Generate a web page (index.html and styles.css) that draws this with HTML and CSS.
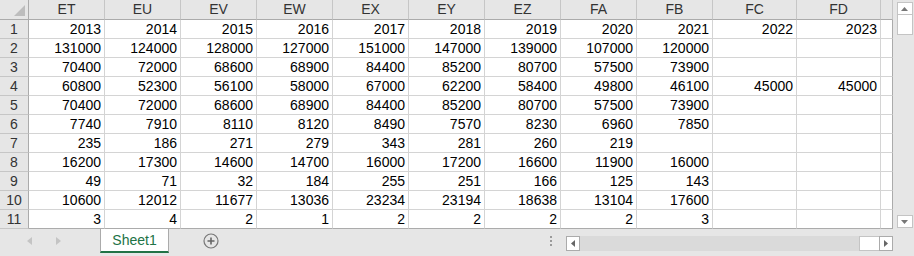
FILE: index.html
```html
<!DOCTYPE html>
<html>
<head>
<meta charset="utf-8">
<link rel="stylesheet" href="styles.css">
</head>
<body>
<div class="app">
  <div class="main">
    <div class="sheet">
      <div class="corner"><div class="tri"></div></div>
      <div class="ch">ET</div><div class="ch">EU</div><div class="ch">EV</div><div class="ch">EW</div><div class="ch">EX</div><div class="ch">EY</div><div class="ch">EZ</div><div class="ch">FA</div><div class="ch">FB</div><div class="ch">FC</div><div class="ch">FD</div><div class="ch"></div>

      <div class="rh">1</div><div class="c">2013</div><div class="c">2014</div><div class="c">2015</div><div class="c">2016</div><div class="c">2017</div><div class="c">2018</div><div class="c">2019</div><div class="c">2020</div><div class="c">2021</div><div class="c">2022</div><div class="c">2023</div><div class="c"></div>

      <div class="rh">2</div><div class="c">131000</div><div class="c">124000</div><div class="c">128000</div><div class="c">127000</div><div class="c">151000</div><div class="c">147000</div><div class="c">139000</div><div class="c">107000</div><div class="c">120000</div><div class="c"></div><div class="c"></div><div class="c"></div>

      <div class="rh">3</div><div class="c">70400</div><div class="c">72000</div><div class="c">68600</div><div class="c">68900</div><div class="c">84400</div><div class="c">85200</div><div class="c">80700</div><div class="c">57500</div><div class="c">73900</div><div class="c"></div><div class="c"></div><div class="c"></div>

      <div class="rh">4</div><div class="c">60800</div><div class="c">52300</div><div class="c">56100</div><div class="c">58000</div><div class="c">67000</div><div class="c">62200</div><div class="c">58400</div><div class="c">49800</div><div class="c">46100</div><div class="c">45000</div><div class="c">45000</div><div class="c"></div>

      <div class="rh">5</div><div class="c">70400</div><div class="c">72000</div><div class="c">68600</div><div class="c">68900</div><div class="c">84400</div><div class="c">85200</div><div class="c">80700</div><div class="c">57500</div><div class="c">73900</div><div class="c"></div><div class="c"></div><div class="c"></div>

      <div class="rh">6</div><div class="c">7740</div><div class="c">7910</div><div class="c">8110</div><div class="c">8120</div><div class="c">8490</div><div class="c">7570</div><div class="c">8230</div><div class="c">6960</div><div class="c">7850</div><div class="c"></div><div class="c"></div><div class="c"></div>

      <div class="rh">7</div><div class="c">235</div><div class="c">186</div><div class="c">271</div><div class="c">279</div><div class="c">343</div><div class="c">281</div><div class="c">260</div><div class="c">219</div><div class="c"></div><div class="c"></div><div class="c"></div><div class="c"></div>

      <div class="rh">8</div><div class="c">16200</div><div class="c">17300</div><div class="c">14600</div><div class="c">14700</div><div class="c">16000</div><div class="c">17200</div><div class="c">16600</div><div class="c">11900</div><div class="c">16000</div><div class="c"></div><div class="c"></div><div class="c"></div>

      <div class="rh">9</div><div class="c">49</div><div class="c">71</div><div class="c">32</div><div class="c">184</div><div class="c">255</div><div class="c">251</div><div class="c">166</div><div class="c">125</div><div class="c">143</div><div class="c"></div><div class="c"></div><div class="c"></div>

      <div class="rh">10</div><div class="c">10600</div><div class="c">12012</div><div class="c">11677</div><div class="c">13036</div><div class="c">23234</div><div class="c">23194</div><div class="c">18638</div><div class="c">13104</div><div class="c">17600</div><div class="c"></div><div class="c"></div><div class="c"></div>

      <div class="rh last">11</div><div class="c last">3</div><div class="c last">4</div><div class="c last">2</div><div class="c last">1</div><div class="c last">2</div><div class="c last">2</div><div class="c last">2</div><div class="c last">2</div><div class="c last">3</div><div class="c last"></div><div class="c last"></div><div class="c last"></div>
    </div>
    <div class="vscroll">
      <div class="vbtn"><svg width="7" height="4" viewBox="0 0 7 4"><path d="M0 4 L3.5 0 L7 4 Z" fill="#777"/></svg></div>
      <div class="vthumb"></div>
      <div class="vtrack"></div>
      <div class="vbtn"><svg width="7" height="4" viewBox="0 0 7 4"><path d="M0 0 L3.5 4 L7 0 Z" fill="#777"/></svg></div>
    </div>
  </div>
  <div class="tabbar">
    <div class="nav">
      <svg width="5" height="8" viewBox="0 0 5 8"><path d="M5 0 L0 4 L5 8 Z" fill="#c4c4c4"/></svg>
      <svg width="5" height="8" viewBox="0 0 5 8"><path d="M0 0 L5 4 L0 8 Z" fill="#c4c4c4"/></svg>
    </div>
    <div class="tab">Sheet1</div>
    <div class="add"><svg width="16" height="16" viewBox="0 0 16 16"><circle cx="8" cy="8" r="7" fill="none" stroke="#777" stroke-width="1.2"/><path d="M8 4.5 V11.5 M4.5 8 H11.5" stroke="#666" stroke-width="1.6"/></svg></div>
    <div class="spacer"></div>
    <div class="dots"><span></span><span></span><span></span></div>
    <div class="hscroll">
      <div class="hbtn"><svg width="4" height="7" viewBox="0 0 4 7"><path d="M4 0 L0 3.5 L4 7 Z" fill="#666"/></svg></div>
      <div class="htrack"></div>
      <div class="hthumb"></div>
      <div class="hbtn"><svg width="4" height="7" viewBox="0 0 4 7"><path d="M0 0 L4 3.5 L0 7 Z" fill="#666"/></svg></div>
    </div>
  </div>
</div>
</body>
</html>
```

FILE: styles.css
```css
html, body {
  margin: 0;
  padding: 0;
  background: #e6e6e6;
}
.app {
  width: 914px;
  height: 256px;
  display: flex;
  flex-direction: column;
  font-family: "Liberation Sans", Arial, sans-serif;
  overflow: hidden;
}
.main {
  display: flex;
  height: 229px;
}
.sheet {
  display: grid;
  grid-template-columns: 29px repeat(9, 76px) repeat(2, 84px) 12px;
  grid-template-rows: 20px repeat(11, 19px);
  width: 893px;
  background: #fff;
  font-size: 14px;
}
.sheet > div {
  box-sizing: border-box;
  border-right: 1px solid #d4d4d4;
  border-bottom: 1px solid #d4d4d4;
  overflow: hidden;
  white-space: nowrap;
}
.corner {
  background: #e6e6e6;
  position: relative;
  border-right-color: #ababab !important;
  border-bottom-color: #ababab !important;
}
.tri {
  position: absolute;
  right: 3px;
  bottom: 3px;
  width: 0;
  height: 0;
  border-left: 11px solid transparent;
  border-bottom: 11px solid #bdbdbd;
}
.ch {
  background: #e6e6e6;
  color: #333;
  text-align: center;
  line-height: 19px;
  border-right-color: #c6c6c6 !important;
  border-bottom-color: #ababab !important;
}
.rh {
  background: #e6e6e6;
  color: #333;
  text-align: center;
  line-height: 18px;
  border-right-color: #ababab !important;
  border-bottom-color: #c6c6c6 !important;
}
.c {
  text-align: right;
  padding-right: 3px;
  line-height: 18px;
  color: #000;
}
.sheet > div:nth-child(13n) {
  border-right-color: #ababab;
}
.sheet > .last {
  border-bottom-color: #ababab;
}
.vscroll {
  width: 21px;
  display: flex;
  flex-direction: column;
  align-items: center;
  padding: 2px 0 1px 2px;
  box-sizing: border-box;
  background: #e6e6e6;
}
.vbtn {
  width: 16px;
  height: 13px;
  box-sizing: border-box;
  border: 1px solid #c4c4c4;
  background: #fff;
  display: flex;
  align-items: center;
  justify-content: center;
}
.vthumb {
  width: 16px;
  height: 20px;
  box-sizing: border-box;
  border: 1px solid #c4c4c4;
  border-top: none;
  background: #fff;
}
.vtrack {
  flex: 1;
}
.tabbar {
  height: 27px;
  display: flex;
  align-items: flex-start;
  background: #e6e6e6;
}
.nav {
  width: 100px;
  display: flex;
  align-items: center;
  gap: 24px;
  padding-left: 27px;
  box-sizing: border-box;
  height: 24px;
}
.tab {
  width: 69px;
  height: 24px;
  box-sizing: border-box;
  background: #fff;
  border-left: 1px solid #ababab;
  border-right: 1px solid #ababab;
  border-bottom: 2px solid #217346;
  color: #217346;
  font-size: 14px;
  line-height: 22px;
  text-align: center;
}
.add {
  margin-left: 34px;
  margin-top: 4px;
  height: 16px;
}
.spacer {
  flex: 1;
}
.dots {
  display: flex;
  flex-direction: column;
  gap: 2px;
  margin-top: 7px;
  margin-right: 14px;
}
.dots span {
  display: block;
  width: 2px;
  height: 2px;
  background: #9a9a9a;
}
.hscroll {
  display: flex;
  height: 15px;
  margin-top: 7px;
  margin-right: 21px;
  width: 327px;
}
.hbtn {
  width: 14px;
  height: 15px;
  box-sizing: border-box;
  border: 1px solid #ababab;
  background: #fff;
  display: flex;
  align-items: center;
  justify-content: center;
}
.htrack {
  flex: 1;
  background: #dadada;
}
.hthumb {
  width: 20px;
  box-sizing: border-box;
  border: 1px solid #c4c4c4;
  border-right: none;
  background: #fff;
}
```
